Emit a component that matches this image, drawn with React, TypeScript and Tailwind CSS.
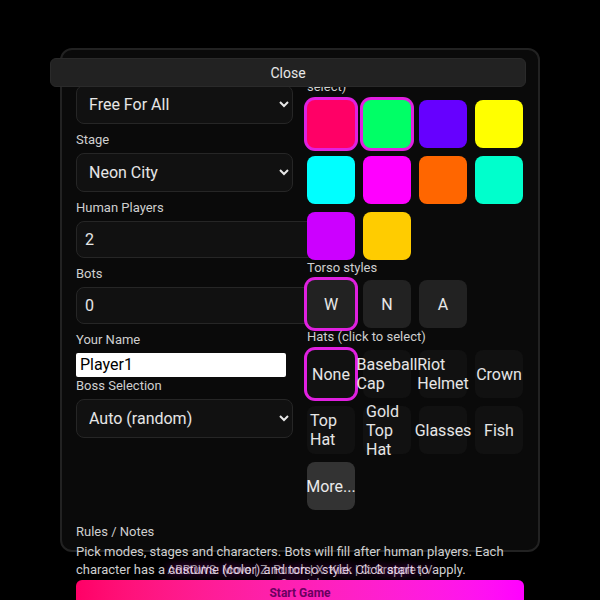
const colors = [
  "#ff0066", "#00ff66", "#6600ff", "#ffff00",
  "#00ffff", "#ff00ff", "#ff6600", "#00ffcc",
  "#cc00ff", "#ffcc00",
];

const torsos = ["W", "N", "A"];
const hats = ["None", "Baseball Cap", "Riot Helmet", "Crown", "Top Hat", "Gold Top Hat", "Glasses", "Fish"];

const ring = "shadow-[0_0_0_3px_#e020e0]";
const fieldLabel = "block mt-[7px] mb-[5px] text-[13px] leading-[17px] text-[#cfcfcf]";
const control = "rounded-lg border border-[#262626] bg-[#111] text-base text-white/90";

function Choice({ label, selected, className }: { label: string; selected?: boolean; className: string }) {
  return (
    <button className={`w-12 h-12 rounded-lg flex items-center justify-center px-[3px] text-base leading-[19px] text-white/90 ${className} ${selected ? ring : ""}`}>
      <span className="text-left">{label}</span>
    </button>
  );
}

function PickSelect({ value }: { value: string }) {
  return (
    <select defaultValue={value} className={`w-[217px] h-[39px] p-2 ${control}`}>
      <option>{value}</option>
    </select>
  );
}

export default function App() {
  return (
    <div className="relative w-[600px] h-[600px] overflow-hidden bg-black font-['Roboto',sans-serif]">
      {/* Modal: content runs past its bottom edge */}
      <div className="absolute left-[60px] top-12 w-[480px] h-[504px] rounded-xl border-2 border-[#222] bg-[#0a0a0a] px-[14px]">
        <button className="relative z-10 block -ml-[26px] mt-2 w-[476px] h-[29px] rounded-md border border-[#2a2a2a] bg-[#222] text-sm text-white/90">
          Close
        </button>

        <div className="-mt-[2px] flex">
          <div className="w-[231px] shrink-0">
            <PickSelect value="Free For All" />
            <label className={fieldLabel}>Stage</label>
            <PickSelect value="Neon City" />
            <label className={fieldLabel}>Human Players</label>
            <input readOnly value="2" className={`w-[240px] h-[37px] px-2 ${control}`} />
            <label className={fieldLabel}>Bots</label>
            <input readOnly value="0" className={`w-[240px] h-[37px] px-2 ${control}`} />
            <label className={fieldLabel}>Your Name</label>
            <input readOnly value="Player1" className="block w-[210px] h-6 px-1 bg-white text-base text-black rounded-[2px]" />
            <label className="block mb-[5px] text-[13px] leading-[17px] text-[#cfcfcf]">Boss Selection</label>
            <PickSelect value="Auto (random)" />
          </div>

          <div className="relative -mt-[7px]">
            <div className="text-[13px] leading-[17px] mb-[5px] text-[#cfcfcf]">select)</div>
            <div className="grid grid-cols-[repeat(4,48px)] gap-2 pb-2 h-[160px]">
              {colors.map((color, i) => (
                <div
                  key={color}
                  className={`w-12 h-12 rounded-lg ${i < 2 ? ring : ""}`}
                  style={{ backgroundColor: color }}
                />
              ))}
            </div>

            <div className="text-[13px] leading-[17px] -mt-px mb-1 text-[#cfcfcf]">Torso styles</div>
            <div className="flex gap-2">
              {torsos.map((t, i) => (
                <Choice key={t} label={t} selected={i === 0} className="bg-[#222]" />
              ))}
            </div>

            <div className="text-[13px] leading-[17px] mb-[5px] text-[#cfcfcf]">Hats (click to select)</div>
            <div className="grid grid-cols-[repeat(4,48px)] gap-2">
              {hats.map((h, i) => (
                <Choice key={h} label={h} selected={i === 0} className="bg-[#111]" />
              ))}
              <Choice label="More..." className="bg-[#333] !px-0" />
            </div>
          </div>
        </div>

        <div className="mt-[13px] text-[13px] leading-[17px] text-[#cfcfcf]">Rules / Notes</div>
        <p className="mt-[3px] text-[13px] leading-[18px] text-[#cfcfcf]">
          Pick modes, stages and characters. Bots will fill after human players. Each character has a costume (color) and torso style. Click start to apply.
        </p>
        <button className="relative z-10 mt-px w-[448px] h-[26px] rounded-md bg-gradient-to-r from-[#ff0066] to-[#ff00ff] text-xs font-bold text-[#6a0060]">
          Start Game
        </button>
      </div>

      {/* Controls hint lying over the notes */}
      <div className="absolute left-0 right-0 top-[563px] text-center text-xs leading-[14px] text-white/60 [text-shadow:0_0_10px_rgba(255,0,255,0.6)]">
        ARROWS: Move | Z: Punch | X: Kick | C: Grapple | V
        <br />
        Special
      </div>
    </div>
  );
}
